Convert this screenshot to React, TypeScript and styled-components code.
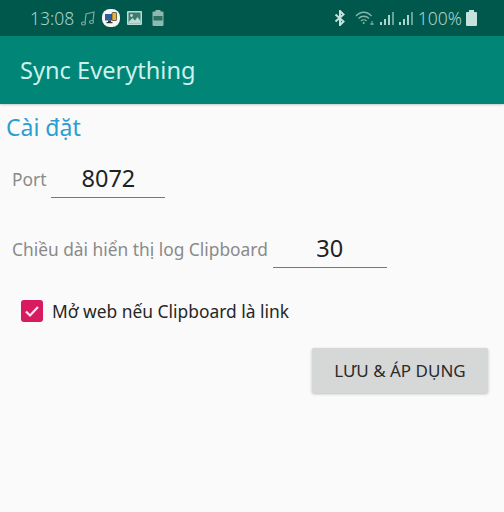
import React from "react";
import styled, { createGlobalStyle } from "styled-components";

const GlobalStyle = createGlobalStyle`
  html, body {
    margin: 0;
    padding: 0;
    background: #fafafa;
    font-family: "Noto Sans", "Open Sans", sans-serif;
  }
`;

const Screen = styled.div`
  display: flex;
  flex-direction: column;
  width: 504px;
  height: 512px;
  overflow: hidden;
  background: #fafafa;
`;

const StatusBar = styled.div`
  display: flex;
  align-items: center;
  justify-content: space-between;
  box-sizing: border-box;
  height: 36px;
  padding: 0 27px 0 30px;
  background: #00574b;
  color: #a9d3cb;
`;

const StatusGroup = styled.div<{ $gap: number }>`
  display: flex;
  align-items: center;
  gap: ${(p) => p.$gap}px;
`;

const StatusText = styled.span`
  font-size: 17.5px;
  line-height: 20px;
  font-weight: 300;
`;

const Toolbar = styled.div`
  display: flex;
  align-items: center;
  box-sizing: border-box;
  height: 68px;
  padding: 0 20px;
  background: #008577;
  box-shadow: 0 1px 2px rgba(0, 0, 0, 0.2);
`;

const AppTitle = styled.div`
  font-size: 23.6px;
  color: #cdf1ea;
`;

const Content = styled.div`
  display: flex;
  flex-direction: column;
  padding: 7px 16px 0 6px;
`;

const Heading = styled.div`
  font-size: 23px;
  line-height: 32px;
  color: #2a9fd0;
`;

const FieldRow = styled.div<{ $top: number }>`
  display: flex;
  align-items: center;
  padding-left: 6px;
  height: 40px;
  margin-top: ${(p) => p.$top}px;
`;

const FieldLabel = styled.span`
  font-size: 17.35px;
  color: #8a8a8a;
  margin-right: 5px;
`;

const FieldInput = styled.div`
  width: 114px;
  height: 38px;
  line-height: 37px;
  box-sizing: border-box;
  border-bottom: 1px solid #777;
  font-size: 23.5px;
  color: #222;
  text-align: center;
`;

const CheckRow = styled.div`
  display: flex;
  align-items: center;
  gap: 9px;
  margin-top: 30px;
  padding-left: 15px;
`;

const CheckBox = styled.div`
  display: flex;
  align-items: center;
  justify-content: center;
  width: 22px;
  height: 22px;
  border-radius: 3px;
  background: #d81b60;
`;

const CheckLabel = styled.span`
  font-size: 17.4px;
  color: #262626;
`;

const Actions = styled.div`
  display: flex;
  justify-content: flex-end;
  margin-top: 25px;
`;

const SaveButton = styled.div`
  display: flex;
  align-items: center;
  justify-content: center;
  width: 176px;
  height: 45px;
  border-radius: 2px;
  background: #d6d7d7;
  box-shadow: 0 1px 3px rgba(0, 0, 0, 0.25);
  font-size: 17px;
  color: #2b2b2b;
`;

const NoteIcon = () => (
  <svg width="14" height="15" viewBox="0 0 14 15" fill="none" stroke="#7fa79f" strokeWidth="1.2">
    <path d="M4 12L5 3l8-2-1 9" />
    <ellipse cx="2.500" cy="12.500" rx="2" ry="1.500" />
    <ellipse cx="10.500" cy="11" rx="2" ry="1.500" />
  </svg>
);

const SyncAppIcon = () => (
  <svg width="18" height="18" viewBox="0 0 18 18">
    <rect width="18" height="18" rx="8" fill="#f4f7f6" />
    <rect x="3" y="5" width="9" height="6.500" fill="#2f5f9e" />
    <rect x="6" y="11.500" width="3" height="2" fill="#333" />
    <rect x="4.500" y="13" width="6" height="1.200" fill="#333" />
    <rect x="10" y="3.500" width="4.500" height="8" rx="0.600" fill="#f0b429" stroke="#333" strokeWidth="0.700" />
  </svg>
);

const ImageIcon = () => (
  <svg width="15" height="14" viewBox="0 0 15 14">
    <rect width="15" height="14" rx="1" fill="#b9dcd5" />
    <rect x="1.500" y="1.500" width="12" height="11" fill="#3f7a6f" />
    <circle cx="4.500" cy="4.500" r="1.400" fill="#b9dcd5" />
    <path d="M1.500 11l4-4 2.500 2.500L10.500 6l3 4v2.500h-12z" fill="#b9dcd5" />
  </svg>
);

const SmallBattery = styled(({ className }: { className?: string }) => (
  <svg className={className} width="12" height="16" viewBox="0 0 12 16">
    <rect x="3.500" y="0" width="5" height="2" fill="#8fb9b0" />
    <rect x="0.500" y="1.500" width="11" height="14.500" rx="1" fill="#8fb9b0" />
    <rect x="1.500" y="6" width="9" height="4.500" fill="#2d6f63" />
  </svg>
))`
  margin-left: 3px;
`;

const BluetoothIcon = () => (
  <svg width="12" height="16" viewBox="0 0 12 16" fill="none" stroke="#c5e3dd" strokeWidth="2">
    <path d="M1.500 4.500l8 7-3.500 3.500V1l3.500 3.500-8 7" />
  </svg>
);

const WifiIcon = () => (
  <svg width="21" height="16" viewBox="0 0 21 16" fill="none" stroke="#86b5ab" strokeWidth="1.300">
    <path d="M1 6c4.500-5 11-5 15.500 0" />
    <path d="M3.500 8.500c3-3 7.500-3 10.500 0" />
    <path d="M6 11c1.500-1.500 4-1.500 5.500 0" />
    <circle cx="8.700" cy="13" r="1" fill="#86b5ab" stroke="none" />
    <path d="M15 14h4M17 11v4" strokeWidth="1" />
  </svg>
);

const SignalIcon = () => (
  <svg width="15" height="16" viewBox="0 0 15 16" fill="#a9d3cb">
    <rect x="0" y="12" width="2" height="3" />
    <rect x="4" y="9" width="2" height="6" />
    <rect x="8" y="5" width="2" height="10" />
    <rect x="12" y="2" width="2" height="13" opacity="0.6" />
  </svg>
);

const BatteryIcon = () => (
  <svg width="11" height="16" viewBox="0 0 11 16" fill="#c5e3dd">
    <rect x="3" y="0" width="5" height="2" />
    <rect x="0" y="2" width="11" height="14" rx="1" />
  </svg>
);

const CheckMark = () => (
  <svg width="16" height="16" viewBox="0 0 16 16" fill="none" stroke="#fbe9f0" strokeWidth="2.200">
    <path d="M2 8.500l4 4 8-8.500" />
  </svg>
);

export default function App() {
  return (
    <Screen>
      <GlobalStyle />
      <StatusBar>
        <StatusGroup $gap={7}>
          <StatusText>13:08</StatusText>
          <NoteIcon />
          <SyncAppIcon />
          <ImageIcon />
          <SmallBattery />
        </StatusGroup>
        <StatusGroup $gap={9}>
          <BluetoothIcon />
          <StatusGroup $gap={4}>
            <WifiIcon />
            <SignalIcon />
            <SignalIcon />
            <StatusText>100%</StatusText>
            <BatteryIcon />
          </StatusGroup>
        </StatusGroup>
      </StatusBar>
      <Toolbar>
        <AppTitle>Sync Everything</AppTitle>
      </Toolbar>
      <Content>
        <Heading>Cài đặt</Heading>
        <FieldRow $top={16}>
          <FieldLabel>Port</FieldLabel>
          <FieldInput>8072</FieldInput>
        </FieldRow>
        <FieldRow $top={30}>
          <FieldLabel>Chiều dài hiển thị log Clipboard</FieldLabel>
          <FieldInput>30</FieldInput>
        </FieldRow>
        <CheckRow>
          <CheckBox>
            <CheckMark />
          </CheckBox>
          <CheckLabel>Mở web nếu Clipboard là link</CheckLabel>
        </CheckRow>
        <Actions>
          <SaveButton>LƯU &amp; ÁP DỤNG</SaveButton>
        </Actions>
      </Content>
    </Screen>
  );
}
